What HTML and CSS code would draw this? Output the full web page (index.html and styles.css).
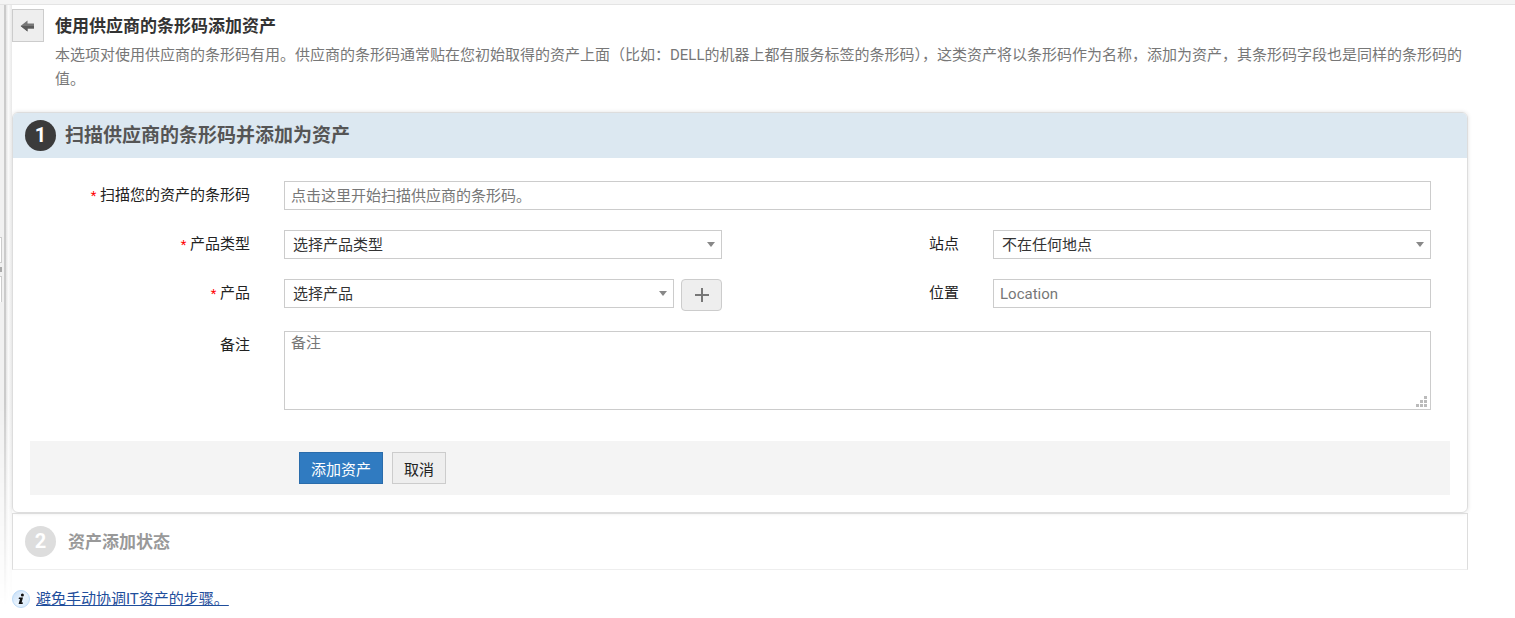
FILE: index.html
```html
<!DOCTYPE html>
<html lang="zh-CN">
<head>
    <meta charset="UTF-8">
    <meta name="viewport" content="width=device-width, initial-scale=1.0">
    <title>使用供应商的条形码添加资产</title>
    <link rel="stylesheet" href="styles.css">
</head>
<body>

<div class="topbar"></div>

<div class="layout">
    <div class="rail">
        <div class="rail-track">
            <span class="tab"></span>
            <span class="grip"></span>
            <span class="tab tab-open"></span>
        </div>
        <div class="rail-line"></div>
        <div class="rail-shade"></div>
    </div>

    <main class="main">
        <header class="page-header">
            <button type="button" class="back-btn" aria-label="返回">
                <svg width="16" height="12" viewBox="0 0 16 12">
                    <path d="M0.5 6 L7.5 0.5 V3.5 H14 V8.5 H7.5 V11.5 Z" fill="#777"/>
                    <path d="M1.2 6.5 L7.5 11.5 V8.5 H14 V6 H1 Z" fill="#5a5a5a"/>
                </svg>
            </button>
            <div class="page-intro">
                <h1>使用供应商的条形码添加资产</h1>
                <p>本选项对使用供应商的条形码有用。供应商的条形码通常贴在您初始取得的资产上面（比如：DELL的机器上都有服务标签的条形码），这类资产将以条形码作为名称，添加为资产，其条形码字段也是同样的条形码的值。</p>
            </div>
        </header>

        <section class="panel">
            <div class="panel-head">
                <span class="step">1</span>
                <h2>扫描供应商的条形码并添加为资产</h2>
            </div>

            <form>
                <div class="fields">
                    <label for="barcode"><span class="required">*</span> 扫描您的资产的条形码</label>
                    <input class="control wide" type="text" id="barcode" placeholder="点击这里开始扫描供应商的条形码。">

                    <label for="type"><span class="required">*</span> 产品类型</label>
                    <div class="select-box">
                        <select class="control" id="type"><option>选择产品类型</option></select>
                    </div>
                    <label for="site">站点</label>
                    <div class="select-box">
                        <select class="control" id="site"><option>不在任何地点</option></select>
                    </div>

                    <label for="product"><span class="required">*</span> 产品</label>
                    <div class="product-row">
                        <div class="select-box">
                            <select class="control" id="product"><option>选择产品</option></select>
                        </div>
                        <button type="button" class="add-btn" aria-label="添加产品">
                            <svg width="14" height="14" viewBox="0 0 14 14">
                                <path d="M7 0 V14 M0 7 H14" stroke="#777" stroke-width="2"/>
                            </svg>
                        </button>
                    </div>
                    <label for="location">位置</label>
                    <input class="control" type="text" id="location" placeholder="Location">

                    <label for="comments">备注</label>
                    <div class="textarea-box wide">
                        <textarea class="control" id="comments" placeholder="备注"></textarea>
                        <svg class="resizer" width="11" height="11" viewBox="0 0 11 11" fill="#bbb">
                            <rect x="8" y="0" width="3" height="3"/>
                            <rect x="4" y="4" width="3" height="3"/>
                            <rect x="8" y="4" width="3" height="3"/>
                            <rect x="0" y="8" width="3" height="3"/>
                            <rect x="4" y="8" width="3" height="3"/>
                            <rect x="8" y="8" width="3" height="3"/>
                        </svg>
                    </div>
                </div>

                <div class="actions">
                    <button type="submit" class="btn btn-primary">添加资产</button>
                    <button type="button" class="btn">取消</button>
                </div>
            </form>
        </section>

        <section class="panel-next">
            <span class="step">2</span>
            <h2>资产添加状态</h2>
        </section>

        <div class="help">
            <svg width="18" height="18" viewBox="0 0 18 18">
                <defs>
                    <linearGradient id="info" x1="0" y1="0" x2="1" y2="1">
                        <stop offset="0" stop-color="#c3dcf6"/>
                        <stop offset="0.5" stop-color="#e9f3fd"/>
                        <stop offset="1" stop-color="#d3e7fa"/>
                    </linearGradient>
                </defs>
                <circle cx="9" cy="9" r="8.5" fill="url(#info)" stroke="#bcdaf7"/>
                <circle cx="10.4" cy="4.9" r="1.5" fill="#111"/>
                <path d="M7 7.5 H11 L9.6 12.5 H11 L10.6 14 H6.6 L8 9 H6.6 Z" fill="#111"/>
            </svg>
            <a href="#">避免手动协调IT资产的步骤。</a>
        </div>
    </main>
</div>

</body>
</html>
```
FILE: styles.css
```css
* {
    box-sizing: border-box;
}
body {
    margin: 0;
    min-height: 100vh;
    display: flex;
    flex-direction: column;
    background-color: #fff;
    color: #222;
    font-family: Roboto, "Noto Sans CJK SC", sans-serif;
    font-size: 15px;
    line-height: 24px;
}
h1, h2, p {
    margin: 0;
}
button, input, select, textarea {
    font-family: inherit;
    font-size: 15px;
}
.topbar {
    height: 5px;
    background-color: #f4f4f4;
    border-bottom: 1px solid #e4e4e4;
}
.layout {
    flex: 1;
    display: flex;
}

/* left splitter */
.rail {
    display: flex;
    width: 12px;
    flex-shrink: 0;
    -webkit-mask-image: linear-gradient(#000 65%, transparent 98%);
    mask-image: linear-gradient(#000 65%, transparent 98%);
}
.rail-track {
    width: 4px;
    padding-top: 232px;
    background-color: #f1f1f1;
    display: flex;
    flex-direction: column;
    gap: 4px;
}
.rail-line {
    width: 2px;
    background-color: #cbcbcb;
}
.rail-shade {
    width: 6px;
    background: linear-gradient(to right, #e4e4e4, #fafafa 40%, #e8e8e8);
}
.tab {
    width: 2px;
    height: 26px;
    background-color: #fff;
    border: 1px solid #ccc;
    border-left: 0;
}
.tab-open {
    border-bottom: 0;
}
.grip {
    width: 2px;
    height: 5px;
    background-color: #aaa;
}

.main {
    flex: 1;
    padding: 4px 47px 0 0;
}
.page-header {
    display: flex;
    align-items: flex-start;
    gap: 11px;
    margin-bottom: 21px;
}
.back-btn {
    display: flex;
    align-items: center;
    justify-content: center;
    flex-shrink: 0;
    width: 32px;
    height: 33px;
    padding: 0;
    background-color: #eee;
    border: 1px solid #ccc;
}
.page-intro h1 {
    font-size: 17px;
    line-height: 34px;
    color: #333;
}
.page-intro p {
    color: #777;
}

.panel {
    border: 1px solid #ddd;
    border-radius: 6px;
    box-shadow: 0 0 4px rgba(0,0,0,0.12);
    overflow: hidden;
}
.panel-head {
    display: flex;
    align-items: center;
    gap: 9px;
    height: 45px;
    padding-left: 12px;
    background-color: #dce8f1;
}
.panel-head h2 {
    font-size: 19px;
    color: #555;
}
.step {
    width: 31px;
    height: 31px;
    border-radius: 50%;
    background-color: #3b3b3b;
    color: #fff;
    font-size: 20px;
    font-weight: bold;
    line-height: 31px;
    text-align: center;
}

.fields {
    display: grid;
    grid-template-columns: 271px 1fr 271px 1fr;
    row-gap: 20px;
    align-items: start;
    padding: 23px 36px 31px 0;
}
.fields label {
    padding-right: 34px;
    line-height: 29px;
    text-align: right;
}
.required {
    color: #f00;
    font-size: 13px;
}
.wide {
    grid-column: span 3;
}
.control {
    display: block;
    width: 100%;
    height: 29px;
    margin: 0;
    padding: 0 6px;
    background-color: #fff;
    border: 1px solid #ccc;
    border-radius: 0;
    color: #333;
}
.control::placeholder {
    color: #777;
}
.select-box {
    position: relative;
    flex: 1;
}
.select-box select {
    appearance: none;
    padding: 0 24px 0 8px;
}
.select-box::after {
    content: "";
    position: absolute;
    top: 12px;
    right: 7px;
    border: 4px solid transparent;
    border-top: 5px solid #888;
    border-bottom: 0;
    pointer-events: none;
}
.product-row {
    display: flex;
    gap: 7px;
}
.add-btn {
    display: flex;
    align-items: center;
    justify-content: center;
    width: 41px;
    height: 32px;
    padding: 0;
    background-color: #eee;
    border: 1px solid #ccc;
    border-radius: 4px;
}
.textarea-box {
    position: relative;
}
.textarea-box textarea {
    height: 79px;
    line-height: 22px;
    resize: none;
}
.resizer {
    position: absolute;
    right: 4px;
    bottom: 3px;
}

.actions {
    display: flex;
    gap: 9px;
    margin: 0 17px 17px;
    padding: 11px 0 11px 269px;
    background-color: #f4f4f4;
}
.btn {
    height: 32px;
    padding: 0 11px;
    background-color: #eee;
    border: 1px solid #ccc;
    color: #222;
}
.btn-primary {
    background-color: #307bc1;
    border-color: #2a6cab;
    color: #fff;
}

.panel-next {
    display: flex;
    align-items: center;
    gap: 12px;
    height: 57px;
    padding-left: 12px;
    border: 1px solid #ddd;
    border-bottom-color: #eee;
}
.panel-next .step {
    background-color: #ddd;
}
.panel-next h2 {
    font-size: 17px;
    color: #999;
}

.help {
    display: flex;
    align-items: center;
    gap: 6px;
    padding-top: 17px;
}
.help a {
    color: #1f4e9c;
}
```
